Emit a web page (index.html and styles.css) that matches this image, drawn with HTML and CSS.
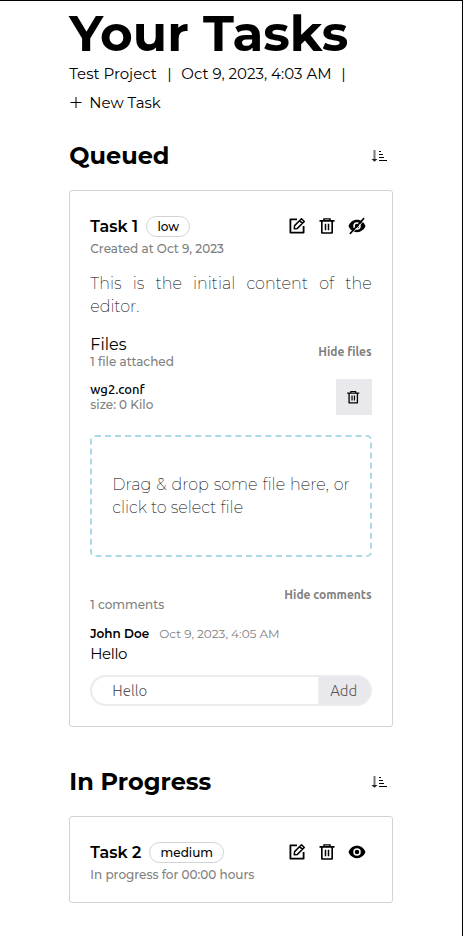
FILE: index.html
```html
<!DOCTYPE html>
<html lang="en">
<head>
<meta charset="utf-8">
<title>Your Tasks</title>
<link rel="stylesheet" href="styles.css">
</head>
<body>
<svg class="defs" width="0" height="0">
  <symbol id="edit" viewBox="0 0 24 24"><path d="M12 3.200H3.200v17.600h17.600V12" fill="none" stroke="#000" stroke-width="2.400" stroke-linejoin="round"/><path d="M8.300 15.700l.5-4.200L18 2.300l3.700 3.700L12.500 15.200zM15.500 4.800l3.700 3.700" fill="none" stroke="#000" stroke-width="2" stroke-linejoin="round"/></symbol>
  <symbol id="trash" viewBox="0 0 24 24"><path d="M7 4V1.500h10V4h5v2.400h-2V21q0 1.400-1.400 1.400H5.400Q4 22.400 4 21V6.400H2V4zM6.200 6.400v13.800h11.600V6.400zM9 9h2v8.500H9zM13 9h2v8.500h-2zM9 3.300V4h6v-.7z" fill-rule="evenodd"/></symbol>
  <symbol id="eye" viewBox="0 0 24 24"><path d="M12 3.800C6.500 3.800 2.400 7.400.7 12c1.700 4.600 5.800 8.200 11.300 8.200s9.600-3.600 11.300-8.200C21.600 7.400 17.500 3.800 12 3.800zM12 7a5 5 0 1 1 0 10 5 5 0 0 1 0-10zm0 2a3 3 0 1 0 0 6 3 3 0 0 0 0-6z" fill-rule="evenodd"/></symbol>
  <symbol id="eye-off" viewBox="0 0 24 24"><use href="#eye"/><path d="M4.300 23L22.800 3" stroke="#fff" stroke-width="1.200"/><path d="M2.500 22.500L21.500 1.500" stroke="#000" stroke-width="2"/></symbol>
  <symbol id="sort" viewBox="0 0 16 14"><path d="M3.500 1v10" stroke="#777" stroke-width="2"/><path d="M.5 10h6L3.500 12.800z" fill="#222"/><path d="M8 2.500h2M8 5.500h4M8 8.500h5M8 11.500h8" stroke="#000"/></symbol>
</svg>
<div class="window">
  <main class="page">
    <h1>Your Tasks</h1>
    <div class="meta"><span class="project">Test Project</span><span>|</span><span class="date">Oct 9, 2023, 4:03 AM</span><span>|</span></div>
    <div class="new"><svg width="12" height="12" viewBox="0 0 12 12"><path d="M.5 6.500h11M6 1v11" stroke="#000"/></svg><span>New Task</span></div>

    <section class="queued">
      <header class="section-head"><h2>Queued</h2><svg class="sort" width="16" height="14"><use href="#sort"/></svg></header>
      <article class="card">
        <div class="task-head">
          <h3 class="t1">Task 1</h3><span class="tag low">low</span>
          <div class="actions"><svg><use href="#edit"/></svg><svg><use href="#trash"/></svg><svg><use href="#eye-off"/></svg></div>
        </div>
        <div class="sub created">Created at Oct 9, 2023</div>
        <p class="content">This is the initial content of the editor.</p>
        <div class="files-head">
          <div><div class="files-title">Files</div><div class="sub attached">1 file attached</div></div>
          <span class="toggle hide-files">Hide files</span>
        </div>
        <div class="file">
          <div><div class="filename">wg2.conf</div><div class="sub size">size: 0 Kilo</div></div>
          <button class="delete"><svg width="14.500" height="14.500"><use href="#trash"/></svg></button>
        </div>
        <div class="drop">Drag &amp; drop some file here, or click to select file</div>
        <div class="comments-head"><span class="sub count">1 comments</span><span class="toggle hide-comments">Hide comments</span></div>
        <div class="author"><b>John Doe</b><time>Oct 9, 2023, 4:05 AM</time></div>
        <div class="comment">Hello</div>
        <div class="add"><div class="field">Hello</div><div class="add-btn">Add</div></div>
      </article>
    </section>

    <section class="progress">
      <header class="section-head"><h2>In Progress</h2><svg class="sort" width="16" height="14"><use href="#sort"/></svg></header>
      <article class="card">
        <div class="task-head">
          <h3 class="t2">Task 2</h3><span class="tag medium">medium</span>
          <div class="actions"><svg><use href="#edit"/></svg><svg><use href="#trash"/></svg><svg><use href="#eye"/></svg></div>
        </div>
        <div class="sub hours">In progress for 00:00 hours</div>
      </article>
    </section>
  </main>
</div>
</body>
</html>
```
FILE: styles.css
```css
* { box-sizing: border-box; }
body { margin: 0; background: #fff; color: #000; font-family: Montserrat, Inter, sans-serif; }
.defs { position: absolute; }
svg { display: block; flex: none; }
h1, h2, h3, p { margin: 0; }
div, span, h1, h2, h3 { white-space: nowrap; }
.window { height: 936px; overflow: hidden; border-top: 1px solid #000; border-right: 1px solid #000; padding-left: 69.3px; }
.page { width: 323.4px; }
h1 { height: 62px; font-size: 50px; line-height: 65px; font-weight: 700; }
.meta { display: flex; height: 22px; line-height: 22px; font-size: 15px; }
.meta .project { width: 98px; }
.meta .date { width: 158px; margin-left: 10px; }
.meta span:nth-child(2) { width: 4px; }
.meta span:last-child { margin-left: 2px; }
.new { display: flex; align-items: center; gap: 7px; height: 22px; margin-top: 6px; padding-left: 1px; font-size: 15px; }
.section-head { display: flex; justify-content: space-between; align-items: center; height: 30px; padding-right: 5.700px; }
h2 { font-size: 24px; line-height: 30px; font-weight: 700; }
.queued { margin-top: 28px; }
.progress { margin-top: 40px; }
.card { margin-top: 19px; border: 1px solid #d3d3d3; border-radius: 3px; padding: 25px 20px 0; }
.queued .card { height: 537px; }
.progress .card { height: 87px; }
.task-head { display: flex; align-items: center; height: 21px; }
h3 { font-size: 16px; line-height: 21px; font-weight: 600; }
.t1 { width: 56px; }
.t2 { width: 59px; }
.tag { height: 21px; line-height: 19px; border: 1px solid #d3d3d3; border-radius: 11px; text-align: center; font-size: 12px; font-weight: 500; }
.low { width: 44px; }
.medium { width: 75px; }
.actions { display: flex; gap: 12px; margin-left: auto; padding-right: 5.700px; }
.actions svg { width: 18px; height: 18px; position: relative; top: -.5px; }
.sub { height: 16px; line-height: 16px; font-size: 12px; font-weight: 500; color: #808080; }
.created, .hours { margin-top: 4px; }
.content { height: 46px; margin-top: 15px; font-size: 16px; line-height: 23px; font-weight: 200; color: #000; text-align: justify; white-space: normal; }
.files-head { display: flex; justify-content: space-between; align-items: center; height: 36px; margin-top: 16px; }
.files-title { height: 20px; line-height: 22px; font-size: 16px; }
.toggle { font-family: Ubuntu, "Noto Sans", sans-serif; font-size: 12px; font-weight: 600; color: #808080; }
.hide-files { margin-top: -2px; }
.file { display: flex; justify-content: space-between; height: 36px; margin-top: 9px; }
.filename { height: 16px; margin-top: 2px; line-height: 16px; font-family: Ubuntu, "Noto Sans", sans-serif; font-size: 13px; font-weight: 500; }
.delete { display: flex; align-items: center; justify-content: center; width: 36px; height: 36px; padding: 0; border: 0; background: #e9e8ed; }
.drop { height: 122px; margin-top: 20px; padding: 36px 20px 0; border: 2px dashed #add8e6; border-radius: 5px; font-size: 16px; line-height: 23px; font-weight: 200; color: #000; text-align: justify; white-space: normal; }
.comments-head { display: flex; justify-content: space-between; height: 30px; margin-top: 28px; }
.count { margin-top: 12px; }
.hide-comments { line-height: 20px; }
.author { display: flex; height: 18px; margin-top: 10px; line-height: 18px; font-size: 12px; }
.author b { width: 69px; font-weight: 600; }
time { color: #808080; font-size: 12px; }
.comment { height: 20px; margin-top: 1px; line-height: 20px; font-size: 15px; letter-spacing: -.4px; }
.add { display: flex; height: 31px; margin-top: 11px; border: 2px solid #ececee; border-radius: 16px; overflow: hidden; background: #e9e8ed; font-family: Ubuntu, "Open Sans", sans-serif; font-size: 15px; line-height: 27px; font-weight: 300; color: #555; }
.field { width: 228px; padding-left: 20px; background: #fff; border-right: 2px solid #ececee; border-radius: 14px 0 0 14px; }
.add-btn { flex: 1; padding-left: 10px; }
```
